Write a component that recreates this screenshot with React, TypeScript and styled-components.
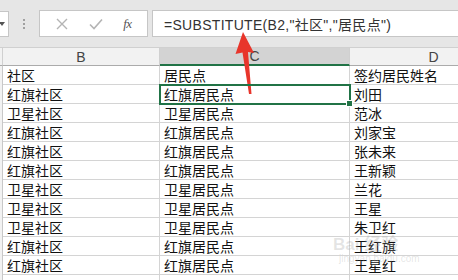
import React from 'react'
import styled, {createGlobalStyle} from 'styled-components'

const GlobalStyle = createGlobalStyle`
  body {
    margin: 0;
    background: #ffffff;
    overflow: hidden;
    font-family: "Noto Sans CJK SC", "Noto Sans", sans-serif;
  }
`

const Page = styled.div`
  position: relative;
  width: 458px;
  height: 280px;
  overflow: hidden;
`

const Toolbar = styled.div`
  display: flex;
  align-items: center;
  height: 48px;
  background: #e6e6e6;
  box-sizing: border-box;
  border-bottom: 1px solid #d0d0d0;
`

const NameBoxEnd = styled.div`
  width: 9px;
  height: 26px;
  background: #ffffff;
  border: 1px solid #c6c6c6;
  border-left: none;
  box-sizing: border-box;
  display: flex;
  align-items: center;
  justify-content: flex-start;
  &::after {
    content: '';
    border-left: 3px solid transparent;
    border-right: 3px solid transparent;
    border-top: 4px solid #555;
    margin-left: -1px;
  }
`

const Grip = styled.div`
  width: 2px;
  height: 12px;
  margin: 0 14px 0 14px;
  background: radial-gradient(circle, #a0a0a0 0.9px, transparent 1.1px) 0 0 / 2px 4px;
`

const IconBox = styled.div`
  display: flex;
  align-items: center;
  justify-content: space-around;
  width: 109px;
  height: 27px;
  background: #ffffff;
  border: 1px solid #c6c6c6;
  box-sizing: border-box;
  padding: 0 6px;
`

const Fx = styled.span`
  font-family: "Liberation Serif", serif;
  font-style: italic;
  font-size: 13px;
  color: #555;
  letter-spacing: -0.5px;
`

const FormulaBox = styled.div`
  flex: 1;
  height: 27px;
  margin-left: 4px;
  background: #ffffff;
  border: 1px solid #c6c6c6;
  border-right: none;
  box-sizing: border-box;
  display: flex;
  align-items: center;
  padding-left: 11px;
  font-family: "Liberation Sans", "Noto Sans CJK SC", sans-serif;
  font-size: 14px;
  letter-spacing: 0.3px;
  color: #333;
  white-space: nowrap;
`

const Sheet = styled.div`
  display: grid;
  grid-template-columns: 3px 157px 190px 168px;
  grid-auto-rows: 19px;
  grid-template-rows: 18px;
`

const HeadCell = styled.div<{$active?: boolean}>`
  box-sizing: border-box;
  background: ${p => (p.$active ? '#d3d3d3' : '#f2f2f2')};
  border-right: 1px solid #d0d0d0;
  border-bottom: ${p => (p.$active ? '2px solid #217346' : '1px solid #ababab')};
  display: flex;
  align-items: center;
  justify-content: center;
  font-family: "Liberation Sans", sans-serif;
  font-size: 14px;
  color: #444;
`

const Cell = styled.div<{$selected?: boolean}>`
  position: relative;
  box-sizing: border-box;
  border-right: 1px solid #d4d4d4;
  border-bottom: 1px solid #d4d4d4;
  padding-left: 4px;
  font-size: 14px;
  line-height: 18px;
  color: #111;
  white-space: nowrap;
  overflow: visible;
  ${p =>
    p.$selected &&
    `
    outline: 2px solid #217346;
    outline-offset: -1px;
    z-index: 1;
    &::after {
      content: '';
      position: absolute;
      right: -4px;
      bottom: -4px;
      width: 5px;
      height: 5px;
      background: #217346;
      border: 1px solid #fff;
    }
  `}
`

const RowEdge = styled.div`
  box-sizing: border-box;
  background: #f2f2f2;
  border-right: 1px solid #c8c8c8;
`

const Watermark = styled.div`
  position: absolute;
  left: 333px;
  top: 236px;
  color: rgba(160, 160, 160, 0.28);
  font-family: "Liberation Sans", "Noto Sans CJK SC", sans-serif;
  line-height: 1;
  pointer-events: none;
`

const WmTop = styled.div`
  font-size: 17px;
  font-weight: bold;
`

const WmBottom = styled.div`
  font-size: 10px;
  margin-top: 1px;
  padding-left: 6px;
`

const Arrow = styled.svg`
  position: absolute;
  left: 226px;
  top: 28px;
`

const rows: [string, string, string][] = [
  ['社区', '居民点', '签约居民姓名'],
  ['红旗社区', '红旗居民点', '刘田'],
  ['卫星社区', '卫星居民点', '范冰'],
  ['红旗社区', '红旗居民点', '刘家宝'],
  ['红旗社区', '红旗居民点', '张未来'],
  ['红旗社区', '红旗居民点', '王新颖'],
  ['卫星社区', '卫星居民点', '兰花'],
  ['卫星社区', '卫星居民点', '王星'],
  ['卫星社区', '卫星居民点', '朱卫红'],
  ['红旗社区', '红旗居民点', '王红旗'],
  ['红旗社区', '红旗居民点', '王星红'],
  ['', '', ''],
]

const Cross = () => (
  <svg width="14" height="14" viewBox="0 0 14 14">
    <path d="M2 2 L12 12 M12 2 L2 12" stroke="#b4b4b4" strokeWidth="1.4" fill="none"/>
  </svg>
)

const Check = () => (
  <svg width="16" height="14" viewBox="0 0 16 14">
    <path d="M2 7.5 L6 11.5 L14 2.5" stroke="#b4b4b4" strokeWidth="1.6" fill="none"/>
  </svg>
)

export default function App() {
  return (
    <Page>
      <GlobalStyle/>
      <Toolbar>
        <NameBoxEnd/>
        <Grip/>
        <IconBox>
          <Cross/>
          <Check/>
          <Fx>fx</Fx>
        </IconBox>
        <FormulaBox>=SUBSTITUTE(B2,"社区","居民点")</FormulaBox>
      </Toolbar>
      <Sheet>
        <HeadCell/>
        <HeadCell>B</HeadCell>
        <HeadCell $active>C</HeadCell>
        <HeadCell>D</HeadCell>
        {rows.map((r, i) => (
          <React.Fragment key={i}>
            <RowEdge/>
            <Cell>{r[0]}</Cell>
            <Cell $selected={i === 1}>{r[1]}</Cell>
            <Cell>{r[2]}</Cell>
          </React.Fragment>
        ))}
      </Sheet>
      <Watermark>
        <WmTop>Bai 经验</WmTop>
        <WmBottom>jingyan.baidu.com</WmBottom>
      </Watermark>
      <Arrow width="40" height="70" viewBox="0 0 40 70">
        <path d="M17 4 L28 25 L22 24 L25.5 66 L23 66 L16.5 24.5 L9.5 26 Z" fill="#e8352b"/>
      </Arrow>
    </Page>
  )
}
